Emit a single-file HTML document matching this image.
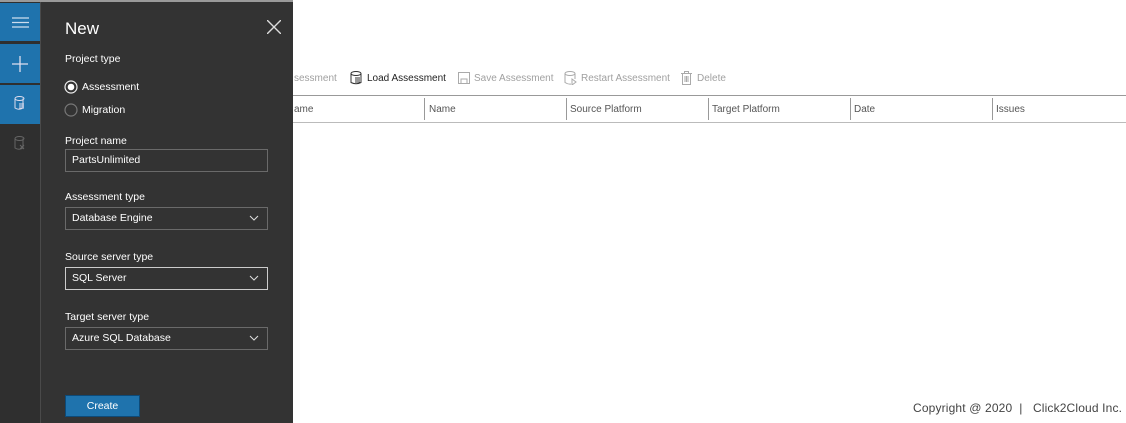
<!DOCTYPE html>
<html><head><style>
body{margin:0;width:1126px;height:423px;background:#fff;font-family:"Liberation Sans",sans-serif;position:relative;overflow:hidden;font-size:11px}
.a{position:absolute}
.side{left:0;top:2px;width:40px;height:421px;background:#2f2f2f;border-right:1px solid #4a4a4a}
.btn{position:absolute;left:0;width:40px;background:#1f73ad;}
.panel{left:41px;top:2px;width:252px;height:421px;background:#333333}
.lbl{color:#fff;font-size:10.5px;left:24px}
.inp{left:24px;color:#fff;font-size:10.5px;line-height:21px;padding-left:6px;box-sizing:border-box;width:203px;height:23px;border:1px solid #6a6a6a}
.inp.sel{border-color:#ccc}
.chev{position:absolute;right:8px;top:5px}
.tb{top:73px;color:#a0a0a0;font-size:10px}
.th{top:104px;color:#555;font-size:10px}
.sep{top:98px;width:1px;height:22px;background:#999}
</style></head><body>
<div class="a" style="left:0;top:0;width:293px;height:2px;background:#9a9a9a"></div>
<div class="a tb" style="left:294px">sessment</div>
<svg class="a" style="left:350px;top:71px" width="13" height="14" viewBox="0 0 13 14"><ellipse cx="6" cy="2.5" rx="5" ry="2" fill="none" stroke="#333"/><path d="M1 2.5V11.5Q6 14 11 11.5V2.5M5 7h5M5 9h5M5 11h5" fill="none" stroke="#333"/></svg>
<div class="a tb" style="left:367px;color:#222">Load Assessment</div>
<svg class="a" style="left:458px;top:72px" width="12" height="12"><rect x="0.5" y="0.5" width="11" height="11" fill="none" stroke="#aaa"/><rect x="3" y="7" width="6" height="4.5" fill="none" stroke="#aaa"/></svg>
<div class="a tb" style="left:474px">Save Assessment</div>
<svg class="a" style="left:564px;top:71px" width="13" height="14"><ellipse cx="6" cy="2.5" rx="5" ry="2" fill="none" stroke="#aaa"/><path d="M1 2.5V11.5Q4 13.5 7 13M11 2.5V8M8 8l4 3-4 3z" fill="none" stroke="#aaa"/></svg>
<div class="a tb" style="left:581px">Restart Assessment</div>
<svg class="a" style="left:681px;top:71px" width="11" height="14"><path d="M0 2.5h11M3.5 2.5V0.5h4v2M1.5 2.5v11h8v-11M4 5v6M5.5 5v6M7 5v6" fill="none" stroke="#aaa"/></svg>
<div class="a tb" style="left:697px">Delete</div>
<div class="a" style="left:293px;top:95px;width:833px;height:1px;background:#999"></div>
<div class="a" style="left:293px;top:122px;width:833px;height:1px;background:#bbb"></div>
<div class="a th" style="left:294px">ame</div>
<div class="a sep" style="left:424px"></div><div class="a th" style="left:429px">Name</div>
<div class="a sep" style="left:566px"></div><div class="a th" style="left:570px">Source Platform</div>
<div class="a sep" style="left:708px"></div><div class="a th" style="left:712px">Target Platform</div>
<div class="a sep" style="left:850px"></div><div class="a th" style="left:854px">Date</div>
<div class="a sep" style="left:992px"></div><div class="a th" style="left:996px">Issues</div>
<div class="a" style="left:913px;top:401px;color:#444;font-size:12px;letter-spacing:0.15px">Copyright @ 2020 &nbsp;| &nbsp; Click2Cloud Inc.</div>

<div class="a side">
 <div class="btn" style="top:1px;height:38px"><svg style="position:absolute;left:12px;top:14px" width="17" height="11"><path d="M0 1h17M0 5.5h17M0 10h17" stroke="#cde" stroke-width="1.3"/></svg></div>
 <div class="btn" style="top:42px;height:39px"><svg style="position:absolute;left:12px;top:12px" width="16" height="16"><path d="M8 0v16M0 8h16" stroke="#dde" stroke-width="1.3"/></svg></div>
 <div class="btn" style="top:83px;height:39px"><svg style="position:absolute;left:14px;top:11px" width="12" height="15"><ellipse cx="5.5" cy="2.5" rx="4.5" ry="2" fill="none" stroke="#dde"/><path d="M1 2.5V12Q5 14.5 9 12V2.5M5 8h5M5 10h5M5 12h5" fill="none" stroke="#dde"/></svg></div>
 <svg style="position:absolute;left:14px;top:134px" width="12" height="15"><ellipse cx="5.5" cy="2.5" rx="4.5" ry="2" fill="none" stroke="#666"/><path d="M1 2.5V12Q5 14.5 9 12V2.5M6 9l4 4M10 9l-4 4" fill="none" stroke="#666"/></svg>
</div>
<div class="a panel">
 <div class="a" style="left:24px;top:17px;color:#fff;font-size:17px">New</div>
 <svg class="a" style="left:226px;top:18px" width="14" height="14"><path d="M0 0L14 14M14 0L0 14" stroke="#ddd" stroke-width="1.4"/></svg>
 <div class="a lbl" style="top:51px">Project type</div>
 <svg class="a" style="left:23px;top:78px" width="14" height="14"><circle cx="7" cy="7" r="6" fill="none" stroke="#eee" stroke-width="1.2"/><circle cx="7" cy="7" r="3.3" fill="#fff"/></svg>
 <div class="a lbl" style="left:41px;top:79px">Assessment</div>
 <svg class="a" style="left:23px;top:101px" width="14" height="14"><circle cx="7" cy="7" r="6" fill="none" stroke="#777" stroke-width="1.2"/></svg>
 <div class="a lbl" style="left:41px;top:102px">Migration</div>
 <div class="a lbl" style="top:133px">Project name</div>
 <div class="a inp" style="top:147px">PartsUnlimited</div>
 <div class="a lbl" style="top:189px">Assessment type</div>
 <div class="a inp" style="top:205px">Database Engine<svg class="chev" width="10" height="10"><path d="M1 3l4 4 4-4" fill="none" stroke="#ddd"/></svg></div>
 <div class="a lbl" style="top:249px">Source server type</div>
 <div class="a inp sel" style="top:265px">SQL Server<svg class="chev" width="10" height="10"><path d="M1 3l4 4 4-4" fill="none" stroke="#ddd"/></svg></div>
 <div class="a lbl" style="top:309px">Target server type</div>
 <div class="a inp" style="top:325px">Azure SQL Database<svg class="chev" width="10" height="10"><path d="M1 3l4 4 4-4" fill="none" stroke="#ddd"/></svg></div>
 <div class="a" style="left:24px;top:393px;width:75px;height:22px;background:#1f73ad;border:1px solid #0d4a78;box-sizing:border-box;color:#fff;text-align:center;line-height:20px;font-size:10.5px">Create</div>
</div>
</body></html>
